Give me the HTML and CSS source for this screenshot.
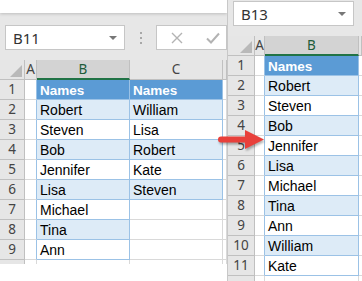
FILE: index.html
```html
<!DOCTYPE html>
<html lang="en">
<head>
  <meta charset="UTF-8">
  <title>Names</title>
  <link rel="stylesheet" href="styles.css">
</head>
<body>
<div class="page">

  <!-- left window -->
  <div class="pane left">
    <div class="topline"></div>
    <div class="bar">
      <div class="namebox"><span>B11</span><i class="tri"></i></div>
      <div class="dots"><b></b><b></b><b></b></div>
      <div class="fxbtns">
        <svg width="12" height="12" viewBox="0 0 12 12"><path d="M1 1 L11 11 M11 1 L1 11" stroke="#b3b3b3" stroke-width="1.4" fill="none"/></svg>
        <svg width="14" height="12" viewBox="0 0 14 12"><path d="M1 6.5 L5 10.5 L13 1.5" stroke="#b3b3b3" stroke-width="2" fill="none"/></svg>
      </div>
    </div>
    <div class="sheet sheet-l">
      <div class="corner"><i></i></div><div class="ch">A</div><div class="ch sel">B</div><div class="ch">C</div><div class="ch"></div>

      <div class="rh">1</div><div class="c ta"></div><div class="c t hd">Names</div><div class="c t hd">Names</div><div class="c"></div>
      <div class="rh">2</div><div class="c ta"></div><div class="c t alt">Robert</div><div class="c t alt">William</div><div class="c"></div>
      <div class="rh">3</div><div class="c ta"></div><div class="c t">Steven</div><div class="c t">Lisa</div><div class="c"></div>
      <div class="rh">4</div><div class="c ta"></div><div class="c t alt">Bob</div><div class="c t alt">Robert</div><div class="c"></div>
      <div class="rh">5</div><div class="c ta"></div><div class="c t">Jennifer</div><div class="c t">Kate</div><div class="c"></div>
      <div class="rh">6</div><div class="c ta"></div><div class="c t alt">Lisa</div><div class="c t alt">Steven</div><div class="c"></div>
      <div class="rh">7</div><div class="c ta"></div><div class="c t">Michael</div><div class="c"></div><div class="c"></div>
      <div class="rh">8</div><div class="c ta"></div><div class="c t alt">Tina</div><div class="c"></div><div class="c"></div>
      <div class="rh">9</div><div class="c ta"></div><div class="c t">Ann</div><div class="c"></div><div class="c"></div>
      <div class="rh"></div><div class="c"></div><div class="c"></div><div class="c"></div><div class="c"></div>
    </div>
  </div>

  <!-- right window -->
  <div class="pane right">
    <div class="bar bar-r">
      <div class="namebox"><span>B13</span><i class="tri"></i></div>
    </div>
    <div class="sheet sheet-r">
      <div class="corner"><i></i></div><div class="ch">A</div><div class="ch sel">B</div><div class="ch"></div>

      <div class="rh">1</div><div class="c ta"></div><div class="c t hd">Names</div><div class="c"></div>
      <div class="rh">2</div><div class="c ta"></div><div class="c t alt">Robert</div><div class="c"></div>
      <div class="rh">3</div><div class="c ta"></div><div class="c t">Steven</div><div class="c"></div>
      <div class="rh">4</div><div class="c ta"></div><div class="c t alt">Bob</div><div class="c"></div>
      <div class="rh">5</div><div class="c ta"></div><div class="c t">Jennifer</div><div class="c"></div>
      <div class="rh">6</div><div class="c ta"></div><div class="c t alt">Lisa</div><div class="c"></div>
      <div class="rh">7</div><div class="c ta"></div><div class="c t">Michael</div><div class="c"></div>
      <div class="rh">8</div><div class="c ta"></div><div class="c t alt">Tina</div><div class="c"></div>
      <div class="rh">9</div><div class="c ta"></div><div class="c t">Ann</div><div class="c"></div>
      <div class="rh">10</div><div class="c ta"></div><div class="c t alt">William</div><div class="c"></div>
      <div class="rh">11</div><div class="c ta"></div><div class="c t">Kate</div><div class="c"></div>
      <div class="rh"></div><div class="c"></div><div class="c"></div><div class="c"></div>
    </div>
  </div>

  <!-- red arrow over both windows -->
  <svg class="arrow" width="54" height="28" viewBox="0 0 54 28">
    <path d="M7 10.5 H33 V16.5 H7 A3 3 0 0 1 7 10.5 Z" fill="#e8403b"/>
    <polygon points="31,4 50,13.5 31,23" fill="#e8403b"/>
  </svg>
</div>
</body>
</html>
```

FILE: styles.css
```css
* {
  margin: 0;
  padding: 0;
  box-sizing: border-box;
}

body {
  background: #fff;
}

.page {
  position: relative;
  width: 362px;
  height: 281px;
  display: flex;
  align-items: flex-start;
  overflow: hidden;
  background: #fff;
}

.pane {
  overflow: hidden;
  background: #fff;
}

.left {
  width: 227px;
  height: 264px;
}

.right {
  width: 135px;
  height: 281px;
  border-left: 1px solid #c8c8c8;
}

.topline {
  height: 13px;
  background: #fff;
  position: relative;
  box-shadow: 0 1px 3px rgba(0, 0, 0, .18);
}

.bar {
  height: 47px;
  background: #e7e7e7;
  display: flex;
  align-items: flex-start;
  padding: 12px 0 0 5px;
}

.bar-r {
  height: 36px;
  padding-top: 1px;
}

.namebox {
  width: 121px;
  height: 25px;
  background: #fff;
  border: 1px solid #c6c6c6;
  display: flex;
  align-items: center;
  justify-content: space-between;
  padding: 0 7px 0 7px;
  font: 15px "Noto Sans", "Liberation Sans", sans-serif;
  color: #333;
}

.tri {
  width: 0;
  height: 0;
  border-left: 4px solid transparent;
  border-right: 4px solid transparent;
  border-top: 4px solid #777;
}

.dots {
  width: 31px;
  height: 25px;
  display: flex;
  flex-direction: column;
  align-items: center;
  justify-content: center;
  gap: 3px;
}

.dots b {
  width: 2px;
  height: 2px;
  background: #a8a8a8;
}

.fxbtns {
  width: 71px;
  height: 25px;
  background: #fff;
  border: 1px solid #c6c6c6;
  display: flex;
  align-items: center;
  padding-left: 14px;
  gap: 23px;
}

.sheet {
  display: grid;
  grid-auto-rows: 20px;
  font: 14px "Liberation Sans", Arial, sans-serif;
  color: #000;
}

.sheet-l {
  grid-template-columns: 25px 12px 93px 93px 4px;
}

.sheet-r {
  grid-template-columns: 27px 10px 94px 3px;
}

.corner,
.ch,
.rh {
  background: #e6e6e6;
  border-right: 1px solid #c0c0c0;
  border-bottom: 1px solid #c0c0c0;
  font: 13.5px "Noto Sans", "Liberation Sans", sans-serif;
  color: #444;
  text-align: center;
  line-height: 19px;
}

.corner {
  position: relative;
}

.corner i {
  position: absolute;
  right: 2px;
  bottom: 2px;
  width: 0;
  height: 0;
  border-left: 12px solid transparent;
  border-bottom: 12px solid #b9b9b9;
}

.ch.sel {
  background: #d3d3d3;
  color: #1e5c3a;
  border-bottom: 2px solid #217346;
}

.c {
  background: #fff;
  border-right: 1px solid #d9d9d9;
  border-bottom: 1px solid #d9d9d9;
  padding: 1px 0 0 3px;
  line-height: 19px;
  white-space: nowrap;
  overflow: hidden;
}

.c.ta {
  border-right-color: #9bc2e6;
}

.c.t {
  border-right-color: #9bc2e6;
  border-bottom-color: #9bc2e6;
}

.c.alt {
  background: #ddebf7;
}

.c.hd {
  background: #5b9bd5;
  color: #fff;
  font-weight: bold;
  font-size: 13.5px;
}

.arrow {
  position: absolute;
  left: 214px;
  top: 126px;
  filter: drop-shadow(1px 2px 1px rgba(0, 0, 0, .3));
}
```
